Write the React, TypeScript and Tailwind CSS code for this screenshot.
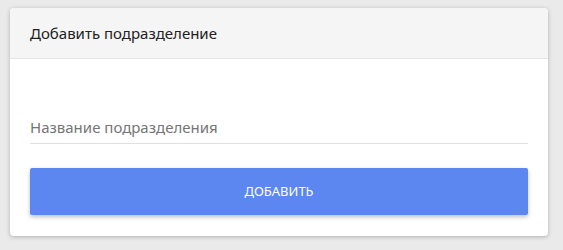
export default function App() {
  return (
    <div className="min-h-[250px] w-full bg-[#eaeaea] pt-2 pl-[10px]" style={{ fontFamily: '"Noto Sans", "Open Sans", sans-serif' }}>
      <div className="w-[538px] overflow-hidden rounded-[4px] bg-white shadow-[0_1px_4px_rgba(0,0,0,0.25)]">
        <div className="flex h-[51px] items-center border-b border-[#e6e6e6] bg-[#f5f5f5] px-5">
          <h2 className="text-[15px] text-[#222]">Добавить подразделение</h2>
        </div>
        <div className="px-5 pt-[56px] pb-[21px]">
          <div className="border-b border-[#e0e0e0] pb-[4px]">
            <input
              className="w-full bg-transparent text-[15px] text-[#333] outline-none placeholder:text-[#757575]"
              placeholder="Название подразделения"
            />
          </div>
          <button className="mt-6 flex h-[47px] w-full items-center justify-center rounded-[2px] bg-[#5c86f0] text-[13px] text-white shadow-[0_2px_4px_rgba(0,0,0,0.25)]">
            ДОБАВИТЬ
          </button>
        </div>
      </div>
    </div>
  );
}
